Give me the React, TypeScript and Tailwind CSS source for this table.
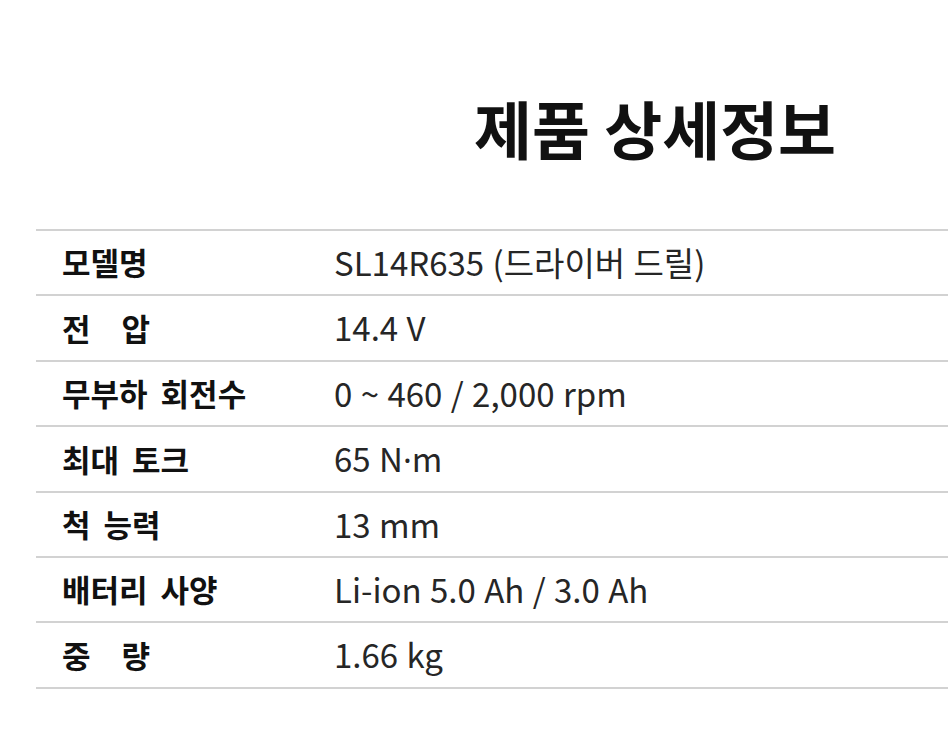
import React from "react";

const rows: { label: React.ReactNode; value: React.ReactNode }[] = [
  { label: "모델명", value: "SL14R635 (드라이버 드릴)" },
  {
    label: (
      <span className="flex gap-[31px]">
        <span>전</span>
        <span>압</span>
      </span>
    ),
    value: "14.4 V",
  },
  { label: "무부하 회전수", value: "0 ~ 460 / 2,000 rpm" },
  {
    label: "최대 토크",
    value: (
      <>
        65 N<span style={{ fontFamily: '"Noto Sans", sans-serif' }}>·</span>m
      </>
    ),
  },
  { label: "척 능력", value: "13 mm" },
  { label: "배터리 사양", value: "Li-ion 5.0 Ah / 3.0 Ah" },
  {
    label: (
      <span className="flex gap-[31px]">
        <span>중</span>
        <span>량</span>
      </span>
    ),
    value: "1.66 kg",
  },
];

export default function App() {
  return (
    <div
      className="w-[948px] h-[750px] bg-white overflow-hidden"
      style={{ fontFamily: '"Noto Sans CJK KR", "Noto Sans", sans-serif' }}
    >
      <div className="pt-[95px] pl-[474px]">
        <h1 className="text-[63px] leading-[63px] font-bold text-[#111] whitespace-nowrap">
          제품 상세정보
        </h1>
      </div>
      <div className="mt-[71px] ml-[36px] w-[960px] border-t-2 border-[#d2d2d2]">
        {rows.map((r, i) => (
          <div
            key={i}
            className="flex items-center h-[65.4px] border-b-2 border-[#d2d2d2]"
          >
            <div className="w-[298px] pl-[26px] text-[31px] font-bold text-[#111] whitespace-nowrap [word-spacing:6px]">
              {r.label}
            </div>
            <div className="text-[33px] text-[#262626] whitespace-nowrap [word-spacing:1px]">
              {r.value}
            </div>
          </div>
        ))}
      </div>
    </div>
  );
}
